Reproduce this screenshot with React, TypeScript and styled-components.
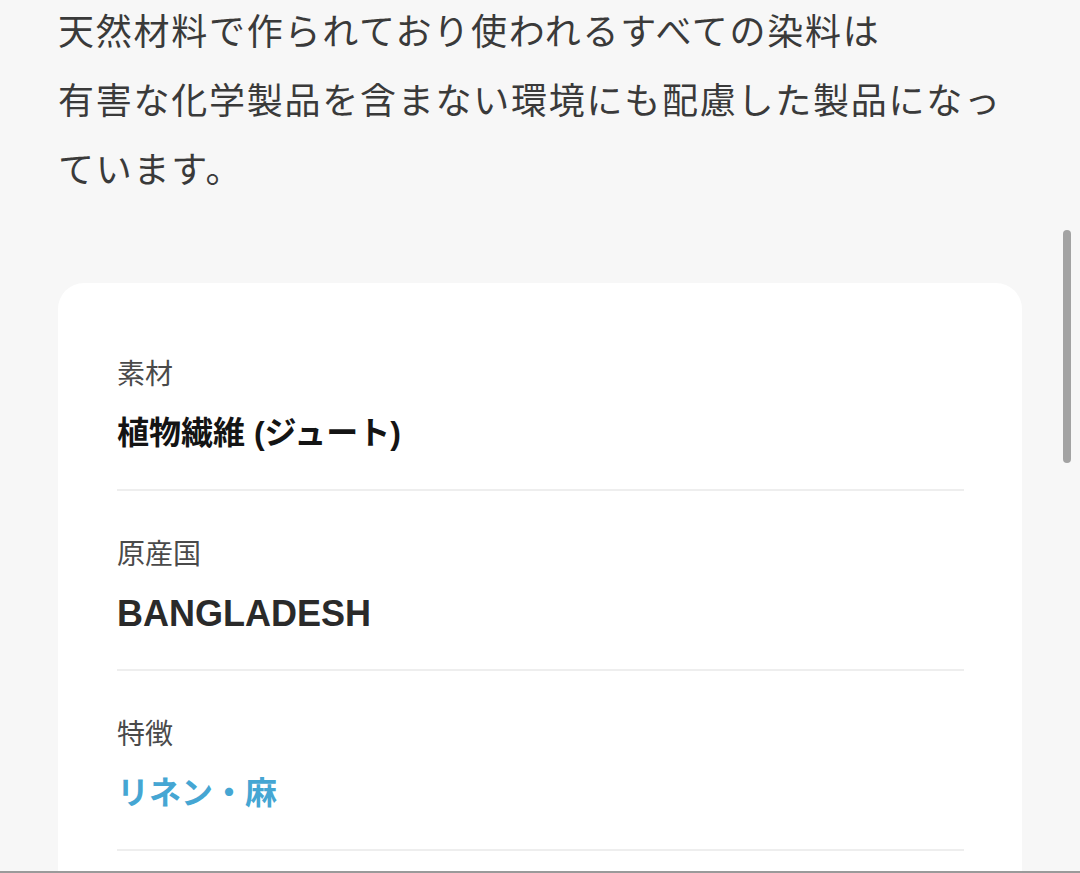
import React from "react";
import styled, { createGlobalStyle } from "styled-components";

const Global = createGlobalStyle`
  html, body { margin: 0; padding: 0; background: #f7f7f7; }
  body { font-family: "Noto Sans CJK JP", "Noto Sans", sans-serif; overflow: hidden; }
`;

const Page = styled.div`
  width: 1080px;
  height: 873px;
  box-sizing: border-box;
  padding: 0 58px;
  overflow: hidden;
  background: #f7f7f7;
`;

const Intro = styled.p`
  margin: -5px 0 0;
  font-family: "Noto Sans CJK JP", sans-serif;
  font-size: 36px;
  letter-spacing: 1.75px;
  line-height: 69px;
  color: #3a3a3a;
  font-weight: 400;
`;

const Card = styled.section`
  margin-top: 81px;
  background: #ffffff;
  border-radius: 26px;
  padding: 70px 58px 200px 59px;
`;

const Row = styled.div`
  display: flex;
  flex-direction: column;
  gap: 19px;
  padding: 0 0 33px;
  border-bottom: 2px solid #eeeeee;
  & + & { padding-top: 42px; }
`;

const Label = styled.div`
  font-family: "Noto Sans CJK JP", sans-serif;
  font-size: 28px;
  line-height: 39px;
  color: #4a4a4a;
`;

const Value = styled.div<{ $tone?: "link" | "plain"; $latin?: boolean }>`
  font-family: "Liberation Sans", "Noto Sans CJK JP", sans-serif;
  font-size: ${(p) => (p.$latin ? "36px" : "32px")};
  line-height: 45px;
  font-weight: 700;
  color: ${(p) => (p.$tone === "link" ? "#45a6d3" : p.$latin ? "#2a2a2a" : "#141414")};
`;

const Scrollbar = styled.div`
  position: fixed;
  left: 1063px;
  top: 230px;
  width: 8px;
  height: 233px;
  border-radius: 4px;
  background: #a3a3a3;
`;

const BottomEdge = styled.div`
  position: fixed;
  left: 0;
  right: 0;
  bottom: 0;
  height: 2px;
  background: #9a9a9a;
`;

const rows = [
  { label: "素材", value: "植物繊維 (ジュート)" },
  { label: "原産国", value: "BANGLADESH", latin: true },
  { label: "特徴", value: "リネン・麻", tone: "link" as const },
];

export default function App() {
  return (
    <>
      <Global />
      <Page>
        <Intro>
          天然材料で作られており使われるすべての染料は
          <br />
          有害な化学製品を含まない環境にも配慮した製品になっ
          <br />
          ています。
        </Intro>
        <Card>
          {rows.map((r) => (
            <Row key={r.label}>
              <Label>{r.label}</Label>
              <Value $latin={r.latin} $tone={r.tone}>
                {r.value}
              </Value>
            </Row>
          ))}
        </Card>
      </Page>
      <Scrollbar />
      <BottomEdge />
    </>
  );
}
